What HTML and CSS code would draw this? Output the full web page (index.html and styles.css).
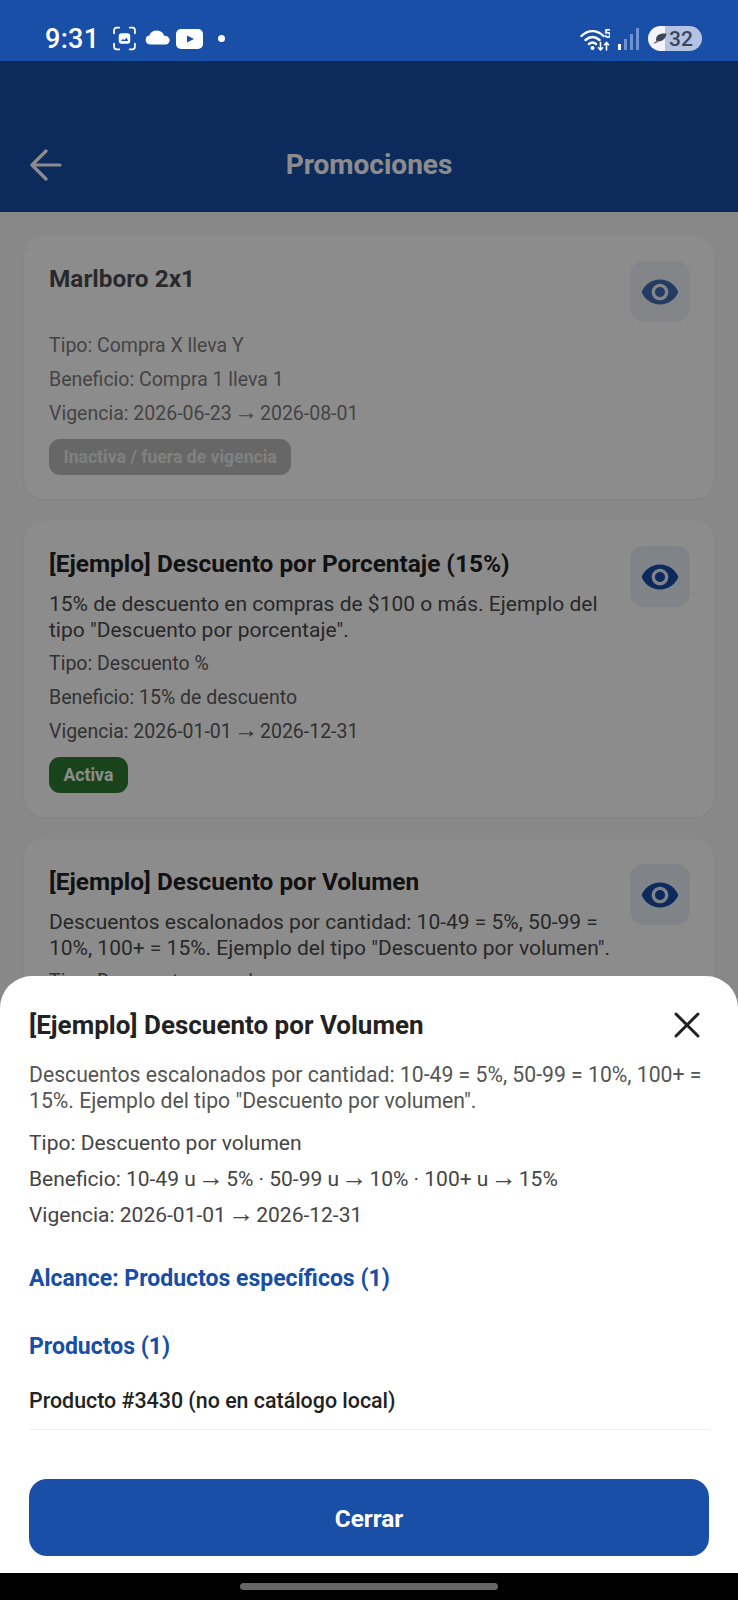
FILE: index.html
```html
<!DOCTYPE html>
<html lang="es">
<head>
  <meta charset="UTF-8">
  <meta name="viewport" content="width=device-width, initial-scale=1.0">
  <title>Promociones</title>
  <link rel="stylesheet" href="styles.css">
</head>
<body>
  <div class="phone">
    <!-- Barra de estado -->
    <div class="status-bar">
      <div class="status-left">
        <span class="clock">9:31</span>
        <svg class="ic-shot" viewBox="0 0 24 24" fill="none" stroke="#fff" stroke-width="1.7" stroke-linecap="round">
          <path d="M2 7V4a2.500 2.500 0 0 1 2.500-2.500H7M17 1.500h2.500A2.500 2.500 0 0 1 22 4v3M22 17v3a2.500 2.500 0 0 1-2.500 2.500H17M7 22.500H4.500A2.500 2.500 0 0 1 2 20v-3"/>
          <rect x="6.500" y="7" width="11" height="10" rx="2.500" fill="#fff" stroke="none"/>
          <path d="M8.500 14.500l2-2 1.500 1 2-2.500 1.500 3.500z" fill="#1a4fa8" stroke="none"/>
        </svg>
        <svg class="ic-cloud" viewBox="0 0 26 16" fill="#fff">
          <path d="M5 15.500a4.500 4.500 0 0 1-.7-8.900A8 8 0 0 1 19.300 7a4.300 4.300 0 0 1 2 8.500z"/>
        </svg>
        <svg class="ic-yt" viewBox="0 0 27 20">
          <rect width="27" height="20" rx="5" fill="#fff"/>
          <path d="M11 6.500l7 3.500-7 3.500z" fill="#1a4fa8"/>
        </svg>
        <span class="dot"></span>
      </div>
      <div class="status-right">
        <svg class="ic-wifi" viewBox="0 0 30 24" fill="none" stroke="#fff" stroke-width="2.400" stroke-linecap="round">
          <path d="M1.500 9c6.500-6.500 15.500-6.500 22 0M5.500 13c4.500-4 9.500-4 14 0M9 17c2.500-2 4.500-2 7 0"/>
          <circle cx="12.500" cy="21" r="2" fill="#fff" stroke="none"/>
          <path d="M20.500 15.500V23M18.500 20.800l2 2.200 2-2.200M26.500 23v-7.500M24.500 17.700l2-2.200 2 2.200" stroke-width="1.600"/>
          <text x="24" y="11" class="wifi-five">5</text>
        </svg>
        <div class="signal">
          <span class="bar-on"></span><span></span><span></span><span></span>
        </div>
        <div class="battery">
          <svg class="ic-leaf" viewBox="0 0 16 12" fill="#3e4556">
            <path d="M15.500.5C9 0 4 1.500 3.500 7c0 1 .3 1.800.6 2.500 6 .5 10.400-3 11.400-9zM.5 11.500C2 9.800 3.500 9 6 8.500l-.5 1.700c-1.500.2-2.500.6-3.500 1.500z"/>
          </svg>
          <span>32</span>
        </div>
      </div>
    </div>

    <div class="screen">
      <!-- Cabecera -->
      <header class="app-bar">
        <svg class="ic-back" viewBox="0 0 32 32" fill="none" stroke="#fff" stroke-width="3.200" stroke-linecap="round" stroke-linejoin="round">
          <path d="M30 16H2.500M16 2L2 16l14 14"/>
        </svg>
        <h1>Promociones</h1>
      </header>

      <!-- Lista de promociones -->
      <div class="promo-list">
        <div class="card inactive">
          <div class="card-head">
            <div class="card-text">
              <div class="card-title">Marlboro 2x1</div>
              <div class="card-desc empty"></div>
            </div>
            <button class="eye-btn">
              <svg viewBox="0 0 24 24"><path d="M12 4.500C7 4.500 2.730 7.610 1 12c1.730 4.390 6 7.500 11 7.500s9.270-3.110 11-7.500c-1.730-4.390-6-7.500-11-7.500zM12 17c-2.760 0-5-2.240-5-5s2.240-5 5-5 5 2.240 5 5-2.240 5-5 5zm0-8c-1.660 0-3 1.340-3 3s1.340 3 3 3 3-1.340 3-3-1.340-3-3-3z"/></svg>
            </button>
          </div>
          <div class="card-row">Tipo: Compra X lleva Y</div>
          <div class="card-row">Beneficio: Compra 1 lleva 1</div>
          <div class="card-row">Vigencia: 2026-06-23 <span class="arrow">→</span> 2026-08-01</div>
          <span class="badge off">Inactiva / fuera de vigencia</span>
        </div>

        <div class="card">
          <div class="card-head">
            <div class="card-text">
              <div class="card-title">[Ejemplo] Descuento por Porcentaje (15%)</div>
              <div class="card-desc">15% de descuento en compras de $100 o más. Ejemplo del tipo "Descuento por porcentaje".</div>
            </div>
            <button class="eye-btn">
              <svg viewBox="0 0 24 24"><path d="M12 4.500C7 4.500 2.730 7.610 1 12c1.730 4.390 6 7.500 11 7.500s9.270-3.110 11-7.500c-1.730-4.390-6-7.500-11-7.500zM12 17c-2.760 0-5-2.240-5-5s2.240-5 5-5 5 2.240 5 5-2.240 5-5 5zm0-8c-1.660 0-3 1.340-3 3s1.340 3 3 3 3-1.340 3-3-1.340-3-3-3z"/></svg>
            </button>
          </div>
          <div class="card-row">Tipo: Descuento %</div>
          <div class="card-row">Beneficio: 15% de descuento</div>
          <div class="card-row">Vigencia: 2026-01-01 <span class="arrow">→</span> 2026-12-31</div>
          <span class="badge on">Activa</span>
        </div>

        <div class="card">
          <div class="card-head">
            <div class="card-text">
              <div class="card-title">[Ejemplo] Descuento por Volumen</div>
              <div class="card-desc">Descuentos escalonados por cantidad: 10-49 = 5%, 50-99 = 10%, 100+ = 15%. Ejemplo del tipo "Descuento por volumen".</div>
            </div>
            <button class="eye-btn">
              <svg viewBox="0 0 24 24"><path d="M12 4.500C7 4.500 2.730 7.610 1 12c1.730 4.390 6 7.500 11 7.500s9.270-3.110 11-7.500c-1.730-4.390-6-7.500-11-7.500zM12 17c-2.760 0-5-2.240-5-5s2.240-5 5-5 5 2.240 5 5-2.240 5-5 5zm0-8c-1.660 0-3 1.340-3 3s1.340 3 3 3 3-1.340 3-3-1.340-3-3-3z"/></svg>
            </button>
          </div>
          <div class="card-row">Tipo: Descuento por volumen</div>
        </div>
      </div>

      <div class="scrim"></div>

      <!-- Hoja de detalle -->
      <div class="sheet">
        <div class="sheet-head">
          <div class="sheet-title">[Ejemplo] Descuento por Volumen</div>
          <svg class="ic-close" viewBox="0 0 26 26" fill="none" stroke="#222" stroke-width="3" stroke-linecap="round">
            <path d="M2 2l22 22M24 2L2 24"/>
          </svg>
        </div>
        <p class="sheet-desc">Descuentos escalonados por cantidad: 10-49 = 5%, 50-99 = 10%, 100+ = 15%. Ejemplo del tipo "Descuento por volumen".</p>
        <div class="sheet-rows">
          <div class="sheet-row">Tipo: Descuento por volumen</div>
          <div class="sheet-row">Beneficio: 10-49 u <span class="arrow">→</span> 5% · 50-99 u <span class="arrow">→</span> 10% · 100+ u <span class="arrow">→</span> 15%</div>
          <div class="sheet-row">Vigencia: 2026-01-01 <span class="arrow">→</span> 2026-12-31</div>
        </div>
        <div class="sheet-section scope">Alcance: Productos específicos (1)</div>
        <div class="sheet-section products">Productos (1)</div>
        <div class="product-row">Producto #3430 (no en catálogo local)</div>
        <button class="close-btn">Cerrar</button>
      </div>
    </div>

    <!-- Barra de navegación -->
    <div class="nav-bar"><span class="home-pill"></span></div>
  </div>
</body>
</html>
```

FILE: styles.css
```css
/* Base */
* {
  box-sizing: border-box;
}
html, body {
  margin: 0;
  padding: 0;
}
body {
  font-family: Roboto, "Liberation Sans", sans-serif;
  background: #000;
}
.phone {
  width: 738px;
  height: 1600px;
  display: flex;
  flex-direction: column;
  overflow: hidden;
}
.arrow {
  font-family: "Liberation Sans", sans-serif;
  font-size: 1.25em;
  line-height: 1;
  margin: 0 -.12em;
}

/* Barra de estado */
.status-bar {
  height: 61px;
  flex: none;
  background: #1a4fa8;
  display: flex;
  align-items: center;
  justify-content: space-between;
  padding: 16px 36px 0 45px;
  color: #fff;
}
.status-left, .status-right {
  display: flex;
  align-items: center;
}
.clock {
  font-size: 27px;
  font-weight: 500;
  letter-spacing: .3px;
  margin-right: 13px;
}
.ic-shot {
  width: 25px;
  height: 25px;
  margin-right: 8px;
}
.ic-cloud {
  width: 26px;
  height: 16px;
  margin-right: 5px;
  margin-bottom: 3px;
}
.ic-yt {
  width: 27px;
  height: 20px;
  margin-right: 15px;
}
.dot {
  width: 7px;
  height: 7px;
  border-radius: 50%;
  background: #fff;
}
.ic-wifi {
  width: 30px;
  height: 24px;
  margin-right: 8px;
}
.wifi-five {
  font-size: 13px;
  font-weight: 700;
  fill: #fff;
  stroke: none;
}
.signal {
  display: flex;
  align-items: flex-end;
  gap: 3px;
  height: 22px;
  margin-right: 9px;
}
.signal span {
  width: 3px;
  background: #6f93d2;
}
.signal span:nth-child(1) { height: 6px; }
.signal span:nth-child(2) { height: 11px; }
.signal span:nth-child(3) { height: 16px; }
.signal span:nth-child(4) { height: 22px; }
.signal .bar-on {
  background: #fff;
}
.battery {
  width: 54px;
  height: 25px;
  border-radius: 13px;
  background: linear-gradient(90deg, #f2f4f9 0, #f2f4f9 17px, #b4c3e2 17px);
  display: flex;
  align-items: center;
  padding-left: 5px;
  color: #3e4556;
  font-size: 21px;
  font-weight: 500;
}
.ic-leaf {
  width: 14px;
  height: 11px;
  margin-right: 2px;
}

/* Pantalla */
.screen {
  flex: 1;
  position: relative;
  overflow: hidden;
  background: #f8f8f9;
}
.app-bar {
  height: 151px;
  background: #174ea6;
  display: flex;
  align-items: center;
  justify-content: center;
  padding-top: 56px;
  position: relative;
}
.app-bar h1 {
  margin: 0;
  color: #fff;
  font-size: 28px;
  font-weight: 700;
}
.ic-back {
  position: absolute;
  left: 30px;
  top: 88px;
  width: 32px;
  height: 32px;
}
.promo-list {
  padding: 24px 24px 0;
  display: flex;
  flex-direction: column;
  gap: 22px;
}
.card {
  background: #fff;
  border-radius: 20px;
  padding: 25px 24px 24px 25px;
  box-shadow: 0 1px 3px rgba(0, 0, 0, .05);
}
.card-head {
  display: flex;
  justify-content: space-between;
  gap: 12px;
}
.card-text {
  flex: 1;
  margin-bottom: 4px;
}
.card-title {
  font-size: 24.400px;
  font-weight: 700;
  line-height: 36px;
  color: #1f1f1f;
}
.card-desc {
  margin-top: 9px;
  font-size: 21px;
  line-height: 26px;
  color: #4a4a4a;
}
.card-desc.empty {
  height: 19px;
}
.eye-btn {
  flex: none;
  width: 60px;
  height: 61px;
  padding: 0;
  border: none;
  border-radius: 14px;
  background: #e9eef7;
  display: flex;
  align-items: center;
  justify-content: center;
}
.eye-btn svg {
  width: 40px;
  height: 40px;
  fill: #174ea6;
}
.card-row {
  font-size: 19.500px;
  line-height: 34px;
  color: #5c5c5c;
}
.badge {
  display: block;
  width: fit-content;
  margin-top: 8px;
  height: 36px;
  line-height: 36px;
  padding: 0 14.500px;
  border-radius: 11px;
  color: #fff;
  font-size: 17.600px;
  font-weight: 700;
}
.badge.on {
  background: #2e7d32;
}
.badge.off {
  background: #bcbcbc;
  color: #eaeaea;
}
.inactive .card-title,
.inactive .card-row,
.inactive .eye-btn svg {
  opacity: .8;
}
.inactive .eye-btn {
  background: #f1f3f8;
}
.scrim {
  position: absolute;
  inset: 0;
  background: rgba(0, 0, 0, .45);
}

/* Hoja de detalle */
.sheet {
  position: absolute;
  left: 0;
  right: 0;
  bottom: 0;
  height: 597px;
  background: #fff;
  border-radius: 32px 32px 0 0;
  padding: 31px 29px 17px;
  display: flex;
  flex-direction: column;
}
.sheet-head {
  display: flex;
  justify-content: space-between;
  align-items: center;
  height: 36px;
  padding-right: 9px;
}
.sheet-title {
  font-size: 26px;
  font-weight: 700;
  color: #222;
}
.ic-close {
  width: 26px;
  height: 26px;
}
.sheet-desc {
  margin: 19px 0 0;
  font-size: 21.200px;
  line-height: 26px;
  color: #555;
}
.sheet-rows {
  margin-top: 11px;
}
.sheet-row {
  font-size: 21px;
  line-height: 36px;
  color: #444;
}
.sheet-section {
  color: #174ea6;
  font-size: 23px;
  font-weight: 700;
  line-height: 30px;
}
.sheet-section.scope {
  margin-top: 31px;
}
.sheet-section.products {
  margin-top: 38px;
}
.product-row {
  margin-top: 25px;
  padding-bottom: 14px;
  border-bottom: 1px solid #eeeeee;
  font-size: 21.400px;
  font-weight: 500;
  line-height: 28px;
  color: #222;
}
.close-btn {
  margin-top: auto;
  height: 77px;
  padding-top: 3px;
  border: none;
  border-radius: 18px;
  background: #1a4fa8;
  color: #fff;
  font-family: inherit;
  font-size: 24.400px;
  font-weight: 700;
}

/* Barra de navegación */
.nav-bar {
  height: 27px;
  flex: none;
  background: #000;
  display: flex;
  align-items: flex-start;
  justify-content: center;
  padding-top: 10px;
}
.home-pill {
  width: 258px;
  height: 7px;
  border-radius: 4px;
  background: #666;
}
```
